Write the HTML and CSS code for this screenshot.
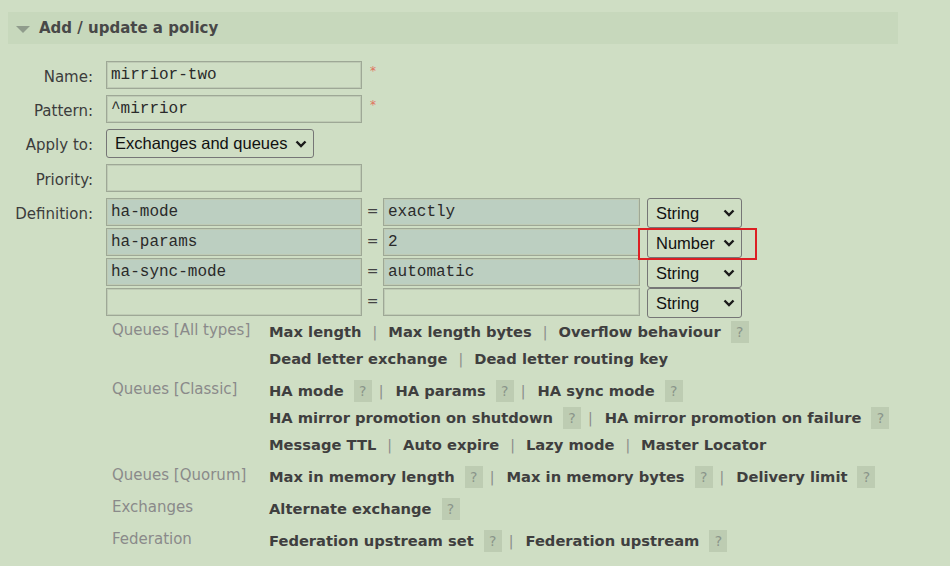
FILE: index.html
```html
<!DOCTYPE html>
<html>
<head>
<meta charset="utf-8">
<link rel="stylesheet" href="styles.css">
</head>
<body>
<div class="panel">
  <div class="panel-head">
    <svg class="tri" width="14" height="7" viewBox="0 0 14 7"><polygon points="0,0 14,0 7,7" fill="#909c8c"/></svg>
    <span>Add / update a policy</span>
  </div>

  <div class="form">
    <label class="lbl">Name:</label>
    <div class="ctl"><input class="txt" type="text" value="mirrior-two"><span class="req">*</span></div>

    <label class="lbl">Pattern:</label>
    <div class="ctl"><input class="txt" type="text" value="^mirrior"><span class="req">*</span></div>

    <label class="lbl">Apply to:</label>
    <div class="ctl">
      <div class="sel sel-apply"><span>Exchanges and queues</span><svg width="12" height="8" viewBox="0 0 12 8"><path d="M1.5 1.5 L6 6 L10.5 1.5" fill="none" stroke="#1a1a1a" stroke-width="2.4"/></svg></div>
    </div>

    <label class="lbl">Priority:</label>
    <div class="ctl"><input class="txt" type="text" value=""></div>

    <label class="lbl">Definition:</label>
    <div class="defs">
      <input class="txt filled" type="text" value="ha-mode"><span class="eq">=</span><input class="txt val filled" type="text" value="exactly">
      <div class="sel sel-type"><span>String</span><svg width="12" height="8" viewBox="0 0 12 8"><path d="M1.5 1.5 L6 6 L10.5 1.5" fill="none" stroke="#1a1a1a" stroke-width="2.4"/></svg></div>

      <input class="txt filled" type="text" value="ha-params"><span class="eq">=</span><input class="txt val filled" type="text" value="2">
      <div class="sel sel-type marked"><span>Number</span><svg width="12" height="8" viewBox="0 0 12 8"><path d="M1.5 1.5 L6 6 L10.5 1.5" fill="none" stroke="#1a1a1a" stroke-width="2.4"/></svg><div class="mark"></div></div>

      <input class="txt filled" type="text" value="ha-sync-mode"><span class="eq">=</span><input class="txt val filled" type="text" value="automatic">
      <div class="sel sel-type"><span>String</span><svg width="12" height="8" viewBox="0 0 12 8"><path d="M1.5 1.5 L6 6 L10.5 1.5" fill="none" stroke="#1a1a1a" stroke-width="2.4"/></svg></div>

      <input class="txt" type="text" value=""><span class="eq">=</span><input class="txt val" type="text" value="">
      <div class="sel sel-type"><span>String</span><svg width="12" height="8" viewBox="0 0 12 8"><path d="M1.5 1.5 L6 6 L10.5 1.5" fill="none" stroke="#1a1a1a" stroke-width="2.4"/></svg></div>
    </div>
  </div>

  <div class="hints">
    <div class="group">
      <div class="cat">Queues [All types]</div>
      <div class="lines">
        <div class="line"><span class="lk">Max length</span><span class="sep">|</span><span class="lk">Max length bytes</span><span class="sep">|</span><span class="lk">Overflow behaviour</span><span class="help">?</span></div>
        <div class="line"><span class="lk">Dead letter exchange</span><span class="sep">|</span><span class="lk">Dead letter routing key</span></div>
      </div>
    </div>
    <div class="group">
      <div class="cat">Queues [Classic]</div>
      <div class="lines">
        <div class="line"><span class="lk">HA mode</span><span class="help">?</span><span class="sep">|</span><span class="lk">HA params</span><span class="help">?</span><span class="sep">|</span><span class="lk">HA sync mode</span><span class="help">?</span></div>
        <div class="line"><span class="lk">HA mirror promotion on shutdown</span><span class="help">?</span><span class="sep">|</span><span class="lk">HA mirror promotion on failure</span><span class="help">?</span></div>
        <div class="line"><span class="lk">Message TTL</span><span class="sep">|</span><span class="lk">Auto expire</span><span class="sep">|</span><span class="lk">Lazy mode</span><span class="sep">|</span><span class="lk">Master Locator</span></div>
      </div>
    </div>
    <div class="group">
      <div class="cat">Queues [Quorum]</div>
      <div class="lines">
        <div class="line"><span class="lk">Max in memory length</span><span class="help">?</span><span class="sep">|</span><span class="lk">Max in memory bytes</span><span class="help">?</span><span class="sep">|</span><span class="lk">Delivery limit</span><span class="help">?</span></div>
      </div>
    </div>
    <div class="group">
      <div class="cat">Exchanges</div>
      <div class="lines">
        <div class="line"><span class="lk">Alternate exchange</span><span class="help">?</span></div>
      </div>
    </div>
    <div class="group">
      <div class="cat">Federation</div>
      <div class="lines">
        <div class="line"><span class="lk">Federation upstream set</span><span class="help">?</span><span class="sep">|</span><span class="lk">Federation upstream</span><span class="help">?</span></div>
      </div>
    </div>
  </div>
</div>
</body>
</html>
```

FILE: styles.css
```css
* { box-sizing: border-box; }

body {
  margin: 0;
  background: #cfdec4;
  font-family: "DejaVu Sans", Verdana, sans-serif;
  color: #444;
}

.panel {
  margin: 12px 0 0 8px;
  width: 890px;
}

.panel-head {
  height: 32px;
  background: #c7d8bc;
  display: flex;
  align-items: center;
  padding-left: 8px;
  gap: 9px;
  font-size: 15px;
  font-weight: bold;
  color: #484848;
}

.tri { margin-top: 2px; }

.form {
  display: grid;
  grid-template-columns: 85px auto;
  column-gap: 13px;
  row-gap: 6px;
  margin-top: 17px;
  align-items: start;
}

.lbl {
  text-align: right;
  font-size: 15px;
  height: 28px;
  line-height: 32px;
  color: #3c3c3c;
  white-space: nowrap;
}

.ctl {
  display: flex;
  align-items: flex-start;
}

.txt {
  width: 256px;
  height: 28px;
  margin: 0;
  border: 1px solid #9ea896;
  box-shadow: inset 0 0 0 1px #bfcbb5;
  background: transparent;
  font-family: "Liberation Mono", "Courier New", monospace;
  font-size: 16px;
  color: #2a2a2a;
  padding: 0 4px;
  outline: none;
}

.txt.val { width: 257px; }

.txt.filled { background: #bccfc1; }

.req {
  color: #e0725e;
  font-size: 12px;
  margin-left: 8px;
  margin-top: 3px;
}

.sel {
  display: flex;
  align-items: center;
  justify-content: space-between;
  border: 1px solid #767676;
  border-radius: 3px;
  font-family: "Liberation Sans", Arial, sans-serif;
  font-size: 16.5px;
  color: #111;
  padding: 0 6px 0 8px;
}

.sel-apply {
  width: 208px;
  height: 29px;
}

.sel-type {
  width: 95px;
  height: 30px;
  margin-left: 7px;
}

.marked { position: relative; }

.mark {
  position: absolute;
  left: -10px;
  top: -1px;
  width: 119px;
  height: 32px;
  border: 2px solid #dc1f23;
}

.defs {
  display: grid;
  grid-template-columns: 256px 21px 257px auto;
  grid-auto-rows: 30px;
  align-items: start;
}

.eq {
  text-align: center;
  font-size: 14px;
  line-height: 26px;
  color: #444;
}

.hints {
  margin-left: 104px;
}

.group {
  display: grid;
  grid-template-columns: 157px auto;
  padding-bottom: 5px;
}

.group:last-child { padding-bottom: 0; }

.cat {
  font-size: 15px;
  line-height: 24px;
  color: #8a8a8a;
  white-space: nowrap;
}

.line {
  display: flex;
  align-items: center;
  height: 27px;
  white-space: nowrap;
}

.lk {
  font-size: 14.7px;
  font-weight: bold;
  color: #3f3f3f;
}

.sep {
  font-size: 14px;
  color: #8a8a8a;
  margin: 0 11px;
}

.help + .sep { margin-left: 7px; margin-right: 12px; }

.help {
  display: inline-block;
  width: 18px;
  height: 22px;
  line-height: 22px;
  text-align: center;
  background: #bdccb2;
  color: #8a958a;
  font-size: 14px;
  margin-left: 10px;
}
```
